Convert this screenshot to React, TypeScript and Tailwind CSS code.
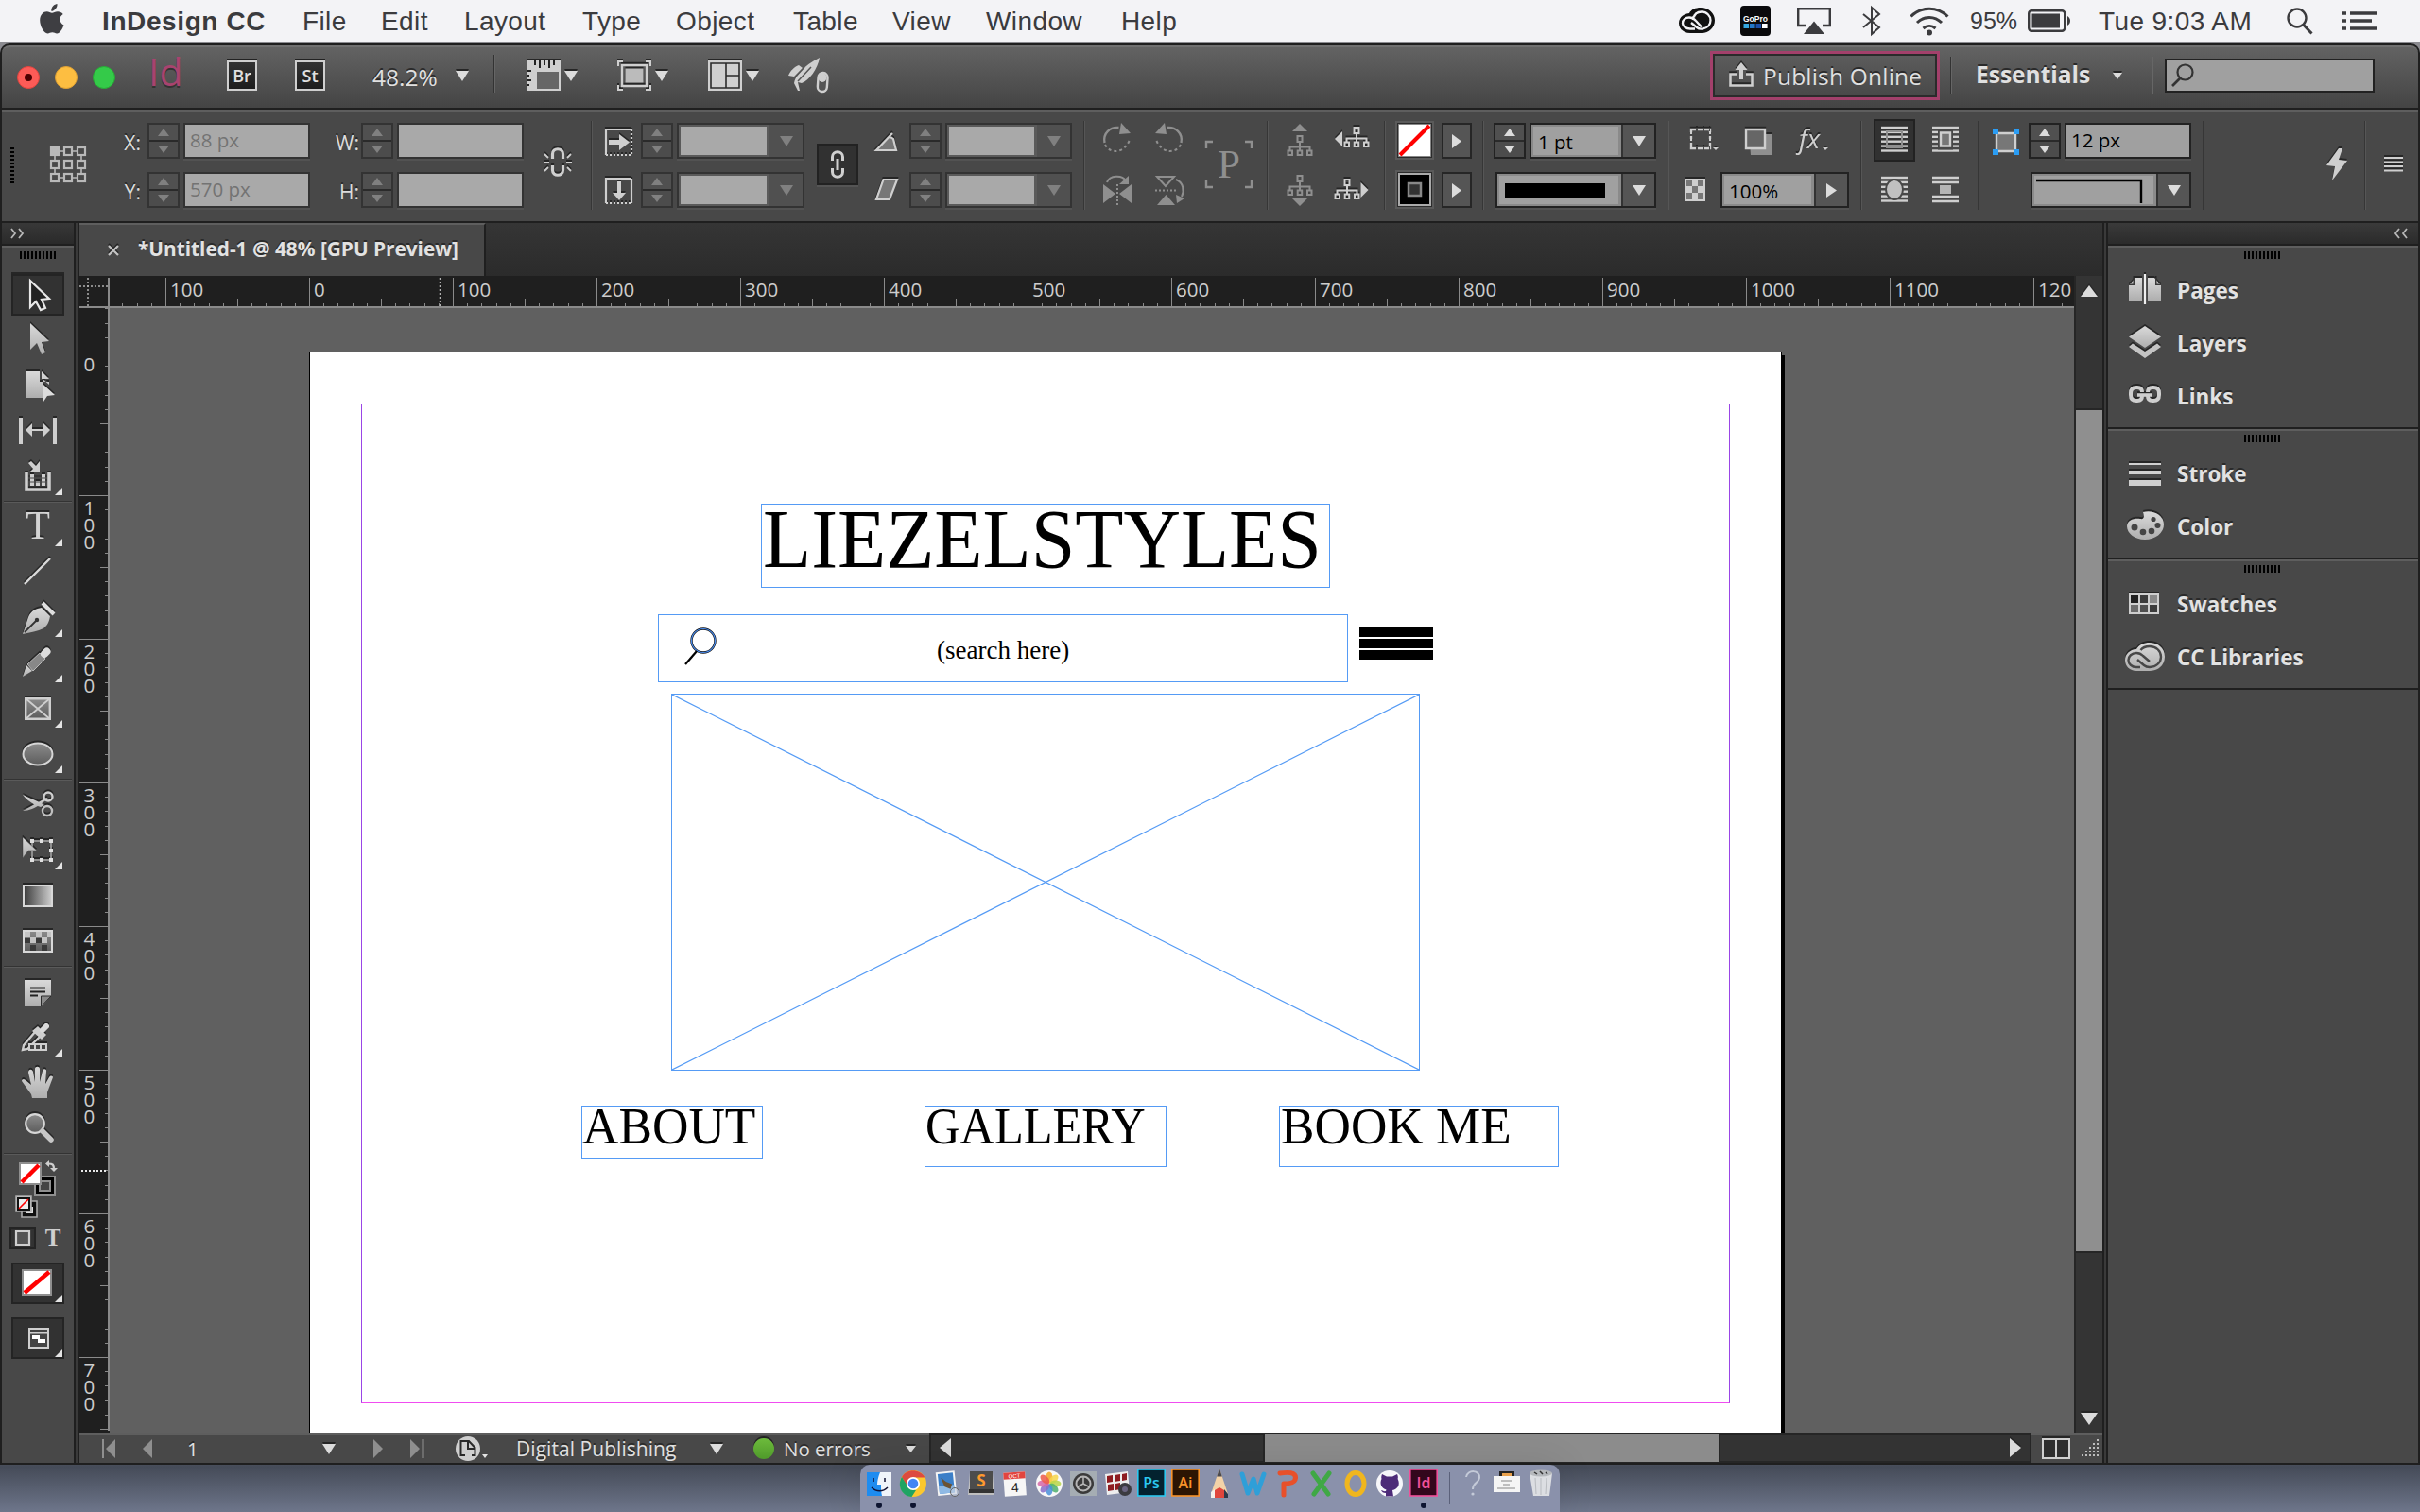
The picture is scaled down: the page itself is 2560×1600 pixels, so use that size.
import React from "react";

type Kids = { children?: React.ReactNode };

const L = "#cfcfcf";
const M = "#8f8f8f";

/* Icon whose view box is given as "x y width height"; drawn at its natural size. */
function Ic({ b, children, className = "" }: Kids & { b: string; className?: string }) {
  const [, , w, h] = b.split(" ");
  return (
    <svg viewBox={b} width={w} height={h} className={"block shrink-0 overflow-visible " + className}>
      {children}
    </svg>
  );
}

const SH = "[filter:drop-shadow(0_-2px_0_#262626)]";

/* ---------- menu bar ---------- */
function MenuBar() {
  const items: [string, string][] = [
    ["File", "w-[83px]"], ["Edit", "w-[88px]"], ["Layout", "w-[125px]"], ["Type", "w-[99px]"],
    ["Object", "w-[124px]"], ["Table", "w-[105px]"], ["View", "w-[99px]"], ["Window", "w-[143px]"], ["Help", "w-[80px]"],
  ];
  return (
    <div className="flex h-[44px] shrink-0 items-center bg-[#f3f3f6] font-['Liberation_Sans',sans-serif] text-[28px] leading-none tracking-[0.400px] text-[#3b3b3e]">
      <Ic b="0 0 26 32" className="ml-[42px] -mt-1">
        <path fill="#3e3e42" d="M18.500 0c.3 2.300-.7 4.300-2 5.800-1.200 1.400-2.800 2.100-4.200 2-.3-2.100.7-4.200 1.900-5.500C15.400.9 17.200.1 18.500 0zM24.700 10.900c-2.200 1.400-3.300 3.200-3.200 5.500.1 2.700 1.500 4.800 4 6-1.400 4.200-4.300 8.900-7.200 9.100-1.900.1-2.700-1.200-4.900-1.200s-3.200 1.200-5 1.200C4.300 31.400.2 23.300.2 17.600c0-6 3.800-9.300 7.300-9.300 2.200 0 4 1.500 5.500 1.500s3.500-1.600 6.200-1.500c2 .1 4.200 1 5.500 2.600z" />
      </Ic>
      <span className="ml-[40px] mt-[2px] w-[212px] font-bold tracking-[0.600px]">InDesign CC</span>
      {items.map(([t, w]) => (
        <span key={t} className={w + " mt-[2px] shrink-0"}>{t}</span>
      ))}
      <div className="ml-auto flex items-center">
        <Ic b="0 0 38 30">
          <path fill="#111" d="M12 28C5 28 0 23.500 0 17.500S5 7.500 11 7C13 3 17.500 1 23 1c8.500 0 15 6 15 13.500S32 28 24 28z" />
          <path fill="none" stroke="#f3f3f6" strokeWidth="2.300" d="M17 23.500h-5c-4.500 0-8-2.600-8-6s3-6 7-6c3 0 5 1.200 7 3.500l6 6.500M13.500 13.500l5-6.500M13 17l6 5c2 1.700 4 2 6 1.500 5-.8 8.500-4.300 8.500-9s-4-9-9.500-9c-5 0-8 3-8 6" />
        </Ic>
        <Ic b="0 0 32 32" className="ml-[27px]">
          <rect width="32" height="32" rx="4" fill="#0a0a0c" />
          <text x="16" y="16.500" fontSize="8.500" fontWeight="bold" fill="#fff" textAnchor="middle" fontFamily="Liberation Sans" letterSpacing="0" textLength="26">GoPro</text>
          <path fill="#35a7e0" d="M3.500 19h5.600v5H3.500z" /><path fill="#2277c8" d="M10 19h5.600v5H10z" /><path fill="#1b4ea8" d="M16.500 19h5.600v5h-5.600z" /><path fill="#fff" d="M23 19h5.600v5H23z" />
        </Ic>
        <Ic b="0 0 36 28" className="ml-[28px]">
          <path fill="none" stroke="#3b3b3e" strokeWidth="2.400" d="M9 19H1.200V1.200h33.600V19H27" /><path fill="#3b3b3e" d="M18 14.500L29 28H7z" />
        </Ic>
        <Ic b="0 0 20 30" className="ml-[33px]">
          <path fill="none" stroke="#3b3b3e" strokeWidth="2" d="M1 8l17 14-8 7V1l8 7L1 22" />
        </Ic>
        <Ic b="0 0 42 30" className="ml-[30px]">
          <g fill="none" stroke="#3b3b3e" strokeWidth="3"><path d="M1.500 10.500c11-11 28-11 39 0" /><path d="M8 17c7.500-7.500 18.500-7.500 26 0" /><path d="M14.500 23c4-3.500 9-3.500 13 0" /></g>
          <circle cx="21" cy="27.500" r="3" fill="#3b3b3e" />
        </Ic>
        <span className="ml-[22px] w-[61px] text-[25px] tracking-[0px]">95%</span>
        <Ic b="0 0 46 24">
          <rect x="1.200" y="1.200" width="38" height="21.600" rx="3" fill="none" stroke="#3b3b3e" strokeWidth="2.400" /><rect x="4.500" y="4.500" width="29.500" height="15" fill="#3b3b3e" /><path fill="#3b3b3e" d="M42 7c4 2 4 8 0 10z" />
        </Ic>
        <span className="ml-[29px] mt-[2px] w-[199px]">Tue 9:03 AM</span>
        <Ic b="0 0 28 28">
          <circle cx="11" cy="11" r="9.500" fill="none" stroke="#3b3b3e" strokeWidth="2.400" /><path stroke="#3b3b3e" strokeWidth="3" d="M17.500 18l9 9.500" />
        </Ic>
        <Ic b="0 0 36 20" className="ml-[31px] mr-[46px]">
          <path stroke="#3b3b3e" strokeWidth="3.600" d="M0 2h4M8 2h28M0 10h4M8 10h23M0 18h4M8 18h28" />
        </Ic>
      </div>
    </div>
  );
}

/* ---------- small shared controls ---------- */
function Down({ w = 14, h = 11, c = "#dcdcdc", className = "" }: { w?: number; h?: number; c?: string; className?: string }) {
  return (
    <Ic b={`0 0 ${w} ${h}`} className={SH + " " + className}>
      <path fill={c} d={`M0 0h${w}L${w / 2} ${h}z`} />
    </Ic>
  );
}
function Spin({ on = false }: { on?: boolean }) {
  const c = on ? "#dcdcdc" : "#808080";
  return (
    <div className={"flex h-[38px] w-[34px] shrink-0 flex-col border-2 bg-[#2c2c2c] " + (on ? "border-[#222]" : "border-[#333]")}>
      <div className="flex flex-1 items-center justify-center bg-[#505050]"><Ic b="0 0 12 8"><path fill={c} d="M6 0l6 8H0z" /></Ic></div>
      <div className="h-[2px] bg-[#2a2a2a]" />
      <div className="flex flex-1 items-center justify-center bg-[#4c4c4c]"><Ic b="0 0 12 8"><path fill={c} d="M6 8l6-8H0z" /></Ic></div>
    </div>
  );
}
function Field({ t = "", on = false }: { t?: string; on?: boolean }) {
  return (
    <div className={"flex h-[38px] w-[134px] shrink-0 items-center border-2 pl-[5px] text-[20.500px] leading-none shadow-[0_2px_0_#525252] " + (on ? "border-[#222] bg-[#a0a0a0] text-black" : "border-[#333] bg-[#a9a9a9] text-[#737373]")}>
      <span className="-mt-[2px]">{t}</span>
    </div>
  );
}
function Combo({ children, on = false, w, right = false }: Kids & { on?: boolean; w: string; right?: boolean }) {
  const c = on ? "#dcdcdc" : "#808080";
  return (
    <div className={"flex h-[38px] shrink-0 border-2 shadow-[0_2px_0_#525252] " + w + (on ? " border-[#222] bg-[#8a8a8a]" : " border-[#333] bg-[#5a5a5a]")}>
      <div className={"my-[2px] ml-[2px] flex flex-1 items-center text-[20.500px] leading-none text-black " + (on ? "bg-[#a0a0a0]" : "bg-[#a9a9a9]")}>{children}</div>
      <div className={"ml-[3px] flex w-[35px] items-center justify-center " + (on ? "border-l-2 border-[#333] bg-[#555]" : "bg-[#505050]")}>
        {right ? <Ic b="0 0 11 15"><path fill={c} d="M0 0l11 7.500L0 15z" /></Ic> : <Ic b="0 0 14 11"><path fill={c} d="M0 0h14L7 11z" /></Ic>}
      </div>
    </div>
  );
}
function ArrowBtn() {
  return (
    <div className="flex h-[38px] w-[32px] items-center justify-center border-2 border-[#262626] bg-[#555]">
      <Ic b="0 0 10 15"><path fill="#dcdcdc" d="M0 0l10 7.500L0 15z" /></Ic>
    </div>
  );
}
function Sep({ m }: { m: string }) {
  return <div className={"mt-[-2px] h-[94px] w-[2px] shrink-0 border-l border-[#363636] bg-[#565656] " + m} />;
}
function Col({ children, className = "" }: Kids & { className?: string }) {
  return <div className={"grid shrink-0 grid-rows-[38px_38px] gap-y-[14px] " + className}>{children}</div>;
}
function Lbl({ children }: Kids) {
  return <div className="flex items-center justify-end pt-[4px] text-[21px] leading-none text-[#dcdcdc] [text-shadow:0_-2px_0_#2a2a2a]">{children}</div>;
}

/* ---------- application bar ---------- */
function AppBar() {
  return (
    <div className="flex h-[66px] shrink-0 items-start rounded-t-[8px] border-t-2 border-[#707070] bg-gradient-to-b from-[#636363] to-[#444] text-[#e0e0e0]">
      <div className="ml-[16px] mt-[20px] flex gap-[16px]">
        <div className="flex size-[24px] items-center justify-center rounded-full border border-[#e0443e] bg-[#fc5b57]"><div className="size-[8px] rounded-full bg-[#4c0002]" /></div>
        <div className="size-[24px] rounded-full border border-[#dea034] bg-[#fdbe41]" />
        <div className="size-[24px] rounded-full border border-[#27aa35] bg-[#34ca49]" />
      </div>
      <div className="ml-[35px] mt-[5px] w-[44px] font-['Open_Sans',sans-serif] text-[41px] leading-none text-[#a8436f] [text-shadow:0_2px_0_#333]">Id</div>
      <div className="ml-[39px] mt-[14px] flex gap-[40px]">
        {["Br", "St"].map((t) => (
          <div key={t} className="flex size-[32px] items-center justify-center border-2 border-[#cfcfcf] bg-gradient-to-b from-[#333] to-[#1d1d1d] text-[18px] font-semibold leading-none shadow-[0_-2px_0_#222]">{t}</div>
        ))}
      </div>
      <div className="ml-[50px] mt-[20px] w-[88px] text-[24.500px] leading-none [text-shadow:0_-2px_0_#2a2a2a]">48.2%</div>
      <Down className="mt-[25px]" />
      <div className="ml-[26px] mt-[8px] h-[40px] w-[2px] border-l border-[#333] bg-[#666]" />
      <Ic b="0 0 36 32" className={"ml-[33px] mt-[14px] " + SH}>
        <path fill={L} d="M0 0h36v32H0z" /><path fill="#666" d="M11 12h23v18H11z" /><path stroke="#222" strokeWidth="2" d="M9 0v5M14 0v8M19 0v5M24 0v8M29 0v5M0 11h5M0 16h3M0 21h5M0 26h3" />
      </Ic>
      <Down className="ml-[4px] mt-[25px]" />
      <Ic b="0 0 36 32" className={"ml-[42px] mt-[14px] " + SH}>
        <path fill="none" stroke={L} strokeWidth="2" d="M1 6V1h5M30 1h5v5M35 26v5h-5M6 31H1v-5" /><path fill="none" stroke={L} strokeWidth="2.500" d="M5 5h26v22H5z" /><path fill="#bbb" d="M8.500 8.500h19v15h-19z" />
      </Ic>
      <Down className="ml-[4px] mt-[25px]" />
      <Ic b="0 0 36 32" className={"ml-[42px] mt-[14px] " + SH}>
        <path fill={L} d="M0 0h36v32H0z" /><path fill="none" stroke="#2a2a2a" strokeWidth="1.600" d="M3 3h30v26H3zM19 3v26M19 16h14" />
      </Ic>
      <Down className="ml-[4px] mt-[25px]" />
      <Ic b="833 60 44 38" className="ml-[31px] mt-[10px]">
        <path fill={L} d="M833 80c2-5 6-9 11-11l4 3-9 9zM839 88c1-7 9-18 27-27-2 12-11 24-19 27l-4-1 2 9h-2z" /><path fill="none" stroke="#555" strokeWidth="1.500" d="M843 86l14-15M838 84l12-13" />
        <rect x="864.200" y="77" width="10" height="20" rx="5" fill="#555" stroke={L} strokeWidth="2.400" transform="rotate(4 869 87)" /><ellipse cx="869" cy="82" rx="4.500" ry="5" fill={L} />
      </Ic>
      <div className="ml-auto mt-[4px] flex h-[52px] w-[243px] items-center border-[3px] border-[#a3406b] bg-gradient-to-b from-[#5d5d5d] to-[#484848] text-[24.500px] leading-none shadow-[inset_0_0_0_2px_#2b2b2b]">
        <Ic b="0 0 26 26" className={"-mt-[3px] ml-[17px] " + SH}>
          <path fill="none" stroke={L} strokeWidth="2.600" d="M8 12.500H1.500v12h23v-12H18" /><path fill={L} d="M13 0l6.500 8H15v10h-4V8H6.500z" />
        </Ic>
        <span className="ml-[10px] mt-[3px] whitespace-nowrap tracking-[0.200px] [text-shadow:0_-2px_0_#2a2a2a]">Publish Online</span>
      </div>
      <div className="ml-[11px] mt-[10px] h-[40px] w-[2px] border-l border-[#333] bg-[#666]" />
      <div className="ml-[25px] mt-[17px] w-[145px] text-[24.500px] font-bold leading-none [text-shadow:0_-2px_0_#2a2a2a]">Essentials</div>
      <Down w={10} h={7} className="mt-[27px]" />
      <div className="ml-[31px] mt-[10px] h-[40px] w-[2px] border-l border-[#333] bg-[#666]" />
      <div className="ml-[12px] mr-[46px] mt-[12px] flex h-[36px] w-[222px] items-center border-2 border-[#222] bg-[#a0a0a0]">
        <Ic b="0 0 26 26" className="ml-[4px]"><circle cx="15.500" cy="9.500" r="8" fill="none" stroke="#333" strokeWidth="2.200" /><path stroke="#333" strokeWidth="2.600" d="M10 16l-8 8" /></Ic>
      </div>
    </div>
  );
}

/* ---------- control strip ---------- */
function Tree({ x, y, c }: { x: number; y: number; c: string }) {
  return (
    <g fill="none" stroke={c} strokeWidth="2" transform={`translate(${x} ${y})`}>
      <path d="M11 1h5v6h-5zM13.500 7v7M3 16v-3.500h21V16M13.500 12v4" /><path d="M1 16.500h4.500v4.500H1zM11.200 16.500h4.500v4.500h-4.500zM21.500 16.500H26v4.500h-4.500z" />
    </g>
  );
}
function Swatch({ none }: { none: boolean }) {
  return (
    <div className="flex h-[41px] w-[41px] -translate-y-[2px] items-center justify-center border-2 border-[#5a5a5a] bg-[#2b2b2b] p-[1px]">
      <Ic b="0 0 35 35">
        {none ? <><path fill="#fff" stroke="#888" strokeWidth="1" d="M.5.5h34v34H.5z" /><path stroke="#f00" strokeWidth="4" d="M2 33L33 2" /></> : <><path fill="#000" stroke="#aaa" strokeWidth="2" d="M1 1h33v33H1z" /><path fill="#333" stroke="#888" strokeWidth="2.500" d="M11 11h13v13H11z" /></>}
      </Ic>
    </div>
  );
}
const wrapLines = (x: number, y: number, n: number) =>
  Array.from({ length: n }, (_, i) => <path key={i} stroke={L} strokeWidth="2.400" d={`M${x} ${y + 1 + i * 4.900}h28`} />);

function ControlStrip() {
  return (
    <div className="flex h-[118px] shrink-0 items-start border-t-2 border-[#5e5e5e] bg-[#484848] pt-[12px]">
      <Ic b="11 156 4 40" className="ml-[9px] mt-[26px]"><path stroke="#000" strokeWidth="4" strokeDasharray="2 2" d="M13 156v40" /></Ic>
      <Ic b="53 155 38 38" className="ml-[38px] mt-[25px]">
        <g fill="none" stroke="#b9b9b9" strokeWidth="2.200">
          <path d="M58 160h28v28H58z" strokeWidth="1.600" />
          {[58, 72, 86].map((x) => [160, 174, 188].map((y) => <rect key={`${x}-${y}`} x={x - 4} y={y - 4} width="8" height="8" fill={x + y === 218 ? "#b9b9b9" : "#484848"} />))}
        </g>
      </Ic>
      <Col className="ml-[37px] w-[21px]"><Lbl>X:</Lbl><Lbl>Y:</Lbl></Col>
      <Col className="ml-[7px]"><Spin /><Spin /></Col>
      <Col className="ml-[4px]"><Field t="88 px" /><Field t="570 px" /></Col>
      <Col className="ml-[24px] w-[28px]"><Lbl>W:</Lbl><Lbl>H:</Lbl></Col>
      <Col className="ml-[2px]"><Spin /><Spin /></Col>
      <Col className="ml-[4px]"><Field /><Field /></Col>
      <Ic b="575 155 30 34" className={"ml-[21px] mt-[25px] " + SH}>
        <path fill="none" stroke={L} strokeWidth="3.200" d="M584.500 168v-5c0-7 11-7 11 0v5M584.500 175v5c0 7 11 7 11 0v-5" /><path stroke={L} strokeWidth="1.800" d="M576 163l4 4M575 172h6M576 181l4-4M604 163l-4 4M605 172h-6M604 181l-4-4" />
      </Ic>
      <Sep m="ml-[20px]" />
      <Col className="ml-[13px]">
        <Ic b="640 130 30 38" className={SH}><path fill="none" stroke={L} strokeWidth="2.200" d="M668 137h-27v27" /><path stroke={L} strokeWidth="2.200" strokeDasharray="2 2" d="M641 164h28M668 137v27" /><path fill={L} d="M644 148h11v-6l11 8.500-11 8.500v-6h-11z" /></Ic>
        <Ic b="640 182 30 38" className={SH}><path fill="none" stroke={L} strokeWidth="2.200" d="M668 189h-27v26M668 189v26" /><path stroke={L} strokeWidth="2.200" strokeDasharray="2 2" d="M641 215h28" /><path fill={L} d="M653 192h4v12h5l-7 8-7-8h5z" /></Ic>
      </Col>
      <Col className="ml-[8px]"><Spin /><Spin /></Col>
      <Col className="ml-[4px]"><Combo w="w-[135px]" /><Combo w="w-[135px]" /></Col>
      <div className="ml-[13px] mt-[22px] flex h-[44px] w-[44px] items-center justify-center border-2 border-[#222] bg-[#313131] shadow-[0_2px_0_#555]">
        <Ic b="0 0 16 30"><path fill="none" stroke={L} strokeWidth="3" d="M2.500 11V7c0-7 11-7 11 0v4M2.500 19v4c0 7 11 7 11 0v-4M8 9v12" /></Ic>
      </div>
      <Col className="ml-[17px]">
        <Ic b="925 130 26 38" className={SH}><path fill="#777" stroke={L} strokeWidth="2.200" d="M944 141l-17 18h21l-3-12c-2-2-3-2-5-2" /></Ic>
        <Ic b="925 182 26 38" className={SH}><path fill="#777" stroke={L} strokeWidth="2.200" d="M934.500 190H949l-8 21h-14z" /></Ic>
      </Col>
      <Col className="ml-[11px]"><Spin /><Spin /></Col>
      <Col className="ml-[4px]"><Combo w="w-[134px]" /><Combo w="w-[134px]" /></Col>
      <Sep m="ml-[12px]" />
      <Col className="ml-[18px]">
        <Ic b="1166 130 32 38"><path fill="none" stroke={M} strokeWidth="2.400" d="M1168.500 151c-2-10 6-17 15-16" /><path fill="none" stroke={M} strokeWidth="2" strokeDasharray="3 3" d="M1169 153c5 10 20 10 26-5" /><path fill={M} d="M1186 130l10 11-12 1z" /></Ic>
        <Ic b="1166 182 32 38"><path fill={M} d="M1167 195v20l13-10zM1197 195v20l-13-10z" /><path stroke={M} strokeWidth="2" strokeDasharray="2 2" d="M1182 195v22" /><path fill="none" stroke={M} strokeWidth="2" d="M1171 193c3-8 16-8 20-2" /><path fill={M} d="M1194 186v9h-10z" /></Ic>
      </Col>
      <Col className="ml-[23px]">
        <Ic b="1221 130 32 38"><path fill="none" stroke={M} strokeWidth="2.400" d="M1249.500 151c2-10-6-17-15-16" /><path fill="none" stroke={M} strokeWidth="2" strokeDasharray="3 3" d="M1249 153c-5 10-20 10-26-5" /><path fill={M} d="M1232 130l-10 11 12 1z" /></Ic>
        <Ic b="1221 182 32 38"><path fill="none" stroke={M} strokeWidth="2" d="M1224 187h18l-9 10z" /><path fill={M} d="M1224 217h19l-9.500-11z" /><path stroke={M} strokeWidth="2" strokeDasharray="2 2" d="M1222 201.500h24" /><path fill="none" stroke={M} strokeWidth="2" d="M1244 190c8 3 9 12 6 18" /><path fill={M} d="M1244 206l9 4-8 5z" /></Ic>
      </Col>
      <Ic b="1275 149 50 50" className="ml-[22px] mt-[19px]">
        <path fill="none" stroke={M} strokeWidth="2.400" d="M1276 157v-7h7M1317 150h7v7M1324 191v7h-7M1283 198h-7v-7" />
        <text x="1300" y="188" textAnchor="middle" fontSize="43" fill={M} fontFamily="Liberation Serif">P</text>
      </Ic>
      <Sep m="ml-[15px]" />
      <Col className="ml-[18px]">
        <Ic b="1360 130 30 38"><path fill={M} d="M1375 131l8 8h-16z" /><Tree x={1361.500} y={143} c={M} /></Ic>
        <Ic b="1360 182 30 38"><path fill={M} d="M1375 218l8-8h-16z" /><Tree x={1361.500} y={185} c={M} /></Ic>
      </Col>
      <Col className="ml-[21px]">
        <Ic b="1411 130 38 38" className={SH}><path fill={L} d="M1412 147l8-8v16z" /><Tree x={1421.500} y={134} c={L} /></Ic>
        <Ic b="1411 182 38 38" className={SH}><path fill={L} d="M1447.500 201l-8-8v16z" /><Tree x={1411.500} y={189} c={L} /></Ic>
      </Col>
      <Sep m="ml-[15px]" />
      <Col className="ml-[10px]"><Swatch none /><Swatch none={false} /></Col>
      <Col className="ml-[8px]"><ArrowBtn /><ArrowBtn /></Col>
      <Sep m="ml-[11px]" />
      <Col className="ml-[10px] w-[172px]">
        <div className="flex gap-[4px]"><Spin on /><Combo on w="w-[134px]"><span className="ml-[5px] mt-[3px]">1 pt</span></Combo></div>
        <div className="pl-[2px]"><Combo on w="w-[170px]"><span className="ml-[6px] h-[15px] w-[106px] bg-black" /></Combo></div>
      </Col>
      <Sep m="ml-[12px]" />
      <Col className="ml-[16px] w-[174px]">
        <Ic b="1782 130 174 38" className={SH}>
          <path fill="none" stroke={L} strokeWidth="2.400" d="M1789 137h20v20h-20z" /><path stroke="#484848" strokeWidth="4" strokeDasharray="2 5" d="M1794 137h15M1794 157h15M1789 142v12M1809 142v12" /><path fill={L} d="M1812 156h6l-3 3z" />
          <path fill={M} d="M1850 142h24v22h-22z" /><path fill="#666" stroke={L} strokeWidth="2.400" d="M1847 137h20v20h-20z" />
          <text x="1903" y="157" fontSize="28" fontStyle="italic" fill={L} fontFamily="Open Sans">fx</text><path fill={L} d="M1928 156h6l-3 3z" />
        </Ic>
        <div className="flex">
          <Ic b="1782 182 22 38" className={SH}><path fill={L} d="M1782 189h22v24h-22z" /><path fill="#777" d="M1784 191h6v6h-6zM1796 191h6v6h-6zM1790 197h6v7h-6zM1784 204h6v7h-6zM1796 204h6v7h-6z" /></Ic>
          <div className="ml-[16px]"><Combo on right w="w-[136px]"><span className="ml-[5px] mt-[3px]">100%</span></Combo></div>
        </div>
      </Col>
      <Sep m="ml-[12px]" />
      <Ic b="1982 126 90 92" className="ml-[12px] mt-[-4px]">
        <path fill="#313131" stroke="#222" strokeWidth="2" d="M1983 127h42v43h-42z" />
        {wrapLines(1990, 134, 6)}<path fill="none" stroke={M} strokeWidth="2" d="M1996 139h16v17h-16z" />
        {wrapLines(2044, 134, 6)}<path fill="#484848" stroke="none" d="M2050 137.500h16v21h-16z" /><path fill="#777" stroke={L} strokeWidth="2.400" d="M2053 140.500h10v14h-10z" />
        {wrapLines(1990, 187, 6)}<ellipse cx="2004" cy="200.500" rx="9" ry="10.500" fill="#c0c0c0" stroke="#484848" strokeWidth="2" />
        <path stroke={L} strokeWidth="2.400" d="M2044 188h28M2044 193h28M2044 208h28M2044 213h28" /><path fill="#b5b5b5" d="M2052 196h12v9h-12z" />
      </Ic>
      <Sep m="ml-[20px]" />
      <Col className="ml-[14px] w-[210px]">
        <div className="flex">
          <Ic b="2108 130 28 38"><path fill="#777" stroke={L} strokeWidth="2.400" d="M2112 141h20v19h-20z" /><path fill="#2b9df4" d="M2108 136h6v6h-6zM2130 136h6v6h-6zM2108 158h6v6h-6zM2130 158h6v6h-6z" /></Ic>
          <div className="ml-[10px] mr-[4px]"><Spin on /></div><Field on t="12 px" />
        </div>
        <div className="pl-[40px]"><Combo on w="w-[170px]"><Ic b="0 0 126 30" className="mt-[3px]"><path fill="none" stroke="#000" strokeWidth="2.400" d="M2 3h111v24" /></Ic></Combo></div>
      </Col>
      <Sep m="ml-[12px]" />
      <Ic b="2461 157 22 34" className={"ml-[129px] mt-[27px] " + SH}><path fill={L} d="M2474 157l-13 18 9 1-3 15 16-21-9-1 4-12z" /></Ic>
      <Sep m="ml-[18px]" />
      <Ic b="0 0 20 16" className={"ml-[19px] mt-[36px] " + SH}><path stroke={L} strokeWidth="2" d="M0 1h20M0 5.500h20M0 10h20M0 14.500h20" /></Ic>
    </div>
  );
}

/* ---------- tools panel ---------- */
function Tool({ y, children, more = false }: Kids & { y: number; more?: boolean }) {
  return (
    <Ic b={`2 ${y} 76 48`}>
      <g className={SH}>{children}</g>
      {more && <path fill="#e4e4e4" d={`M66 ${y + 36}v8h-8z`} />}
    </Ic>
  );
}
const ToolSep = () => <div className="mx-[2px] flex h-[6px] items-center"><div className="h-[2px] w-full border-t border-[#333] bg-[#5a5a5a]" /></div>;
function Grip() {
  return <Ic b="0 0 38 9"><path stroke="#000" strokeWidth="8" strokeDasharray="2 2" d="M0 4h38" /></Ic>;
}
function Tools() {
  const G = "url(#metal)";
  return (
    <div className="flex w-[76px] shrink-0 flex-col bg-[#484848]">
      <svg width="0" height="0" className="absolute"><defs>
        <linearGradient id="metal" x1="0" y1="0" x2="0" y2="1"><stop offset="0" stopColor="#dadada" /><stop offset="1" stopColor="#aeaeae" /></linearGradient>
        <linearGradient id="dim" x1="0" y1="0" x2="0" y2="1"><stop offset="0" stopColor="#8c8c8c" /><stop offset="1" stopColor="#5c5c5c" /></linearGradient>
        <linearGradient id="hgr"><stop offset="0" stopColor="#3a3a3a" /><stop offset="1" stopColor="#d0d0d0" /></linearGradient>
      </defs></svg>
      <div className="h-[22px] bg-gradient-to-b from-[#383838] to-[#2a2a2a] pl-[9px] pt-[6px]"><Ic b="0 0 15 10"><path fill="none" stroke="#b8b8b8" strokeWidth="1.800" d="M1 0l4 5-4 5M9 0l4 5-4 5" /></Ic></div>
      <div className="flex h-[30px] justify-center border-t-2 border-[#1f1f1f] pt-[6px] shadow-[inset_0_2px_0_#5e5e5e]"><Grip /></div>
      <Tool y={288}><path fill="#323232" stroke="#242424" strokeWidth="2" d="M13 291h54v42H13z" /><path fill="#222" stroke="#e8e8e8" strokeWidth="2.200" d="M32 297v28l6-6 5 9 5-2-4-9 8-1z" /></Tool>
      <Tool y={336}><path fill={G} d="M32 342v28l7-7 5 12 4-2-4-11 8-1z" /></Tool>
      <Tool y={384}><path fill={G} d="M28 393h14v11h10v3l-7-6v20H28zM44 393l8 8h-8z" /><path fill="#dcdcdc" d="M46 407v18l4-6 8-1z" /></Tool>
      <Tool y={432}><path stroke={L} strokeWidth="4" d="M22 442v28M58 442v28" /><path fill={L} d="M27 455l7-7v6h12v-6l7 7-7 7v-6H34v6z" /></Tool>
      <Tool y={480} more><path fill="none" stroke={L} strokeWidth="3.600" d="M28 500v18h24v-18" /><path fill={L} d="M32 502h4v12h-4zM38 509h4v5h-4zM44 502h4v12h-4zM42 488v12H31l4-4-5-6 3-2 5 5z" /><path stroke="#484848" d="M30 506h20M30 510h20" /></Tool>
      <ToolSep />
      <Tool y={534} more><text x="40" y="570" textAnchor="middle" fontSize="42" fill="#d4d4d4" fontFamily="Liberation Serif">T</text></Tool>
      <Tool y={582}><path stroke="#dadada" strokeWidth="2.400" d="M26 618l27-27" /></Tool>
      <Tool y={630} more><path fill={G} d="M24 671l6-18c3-7 8-9 14-10l9 9c-1 6-3 10-7 13-6 3-14 4-22 6z" /><path stroke="#dedede" strokeWidth="4" d="M45 638l12 12" /><path stroke="#333" strokeWidth="1.800" d="M26 669l12-12" /><circle cx="39" cy="656" r="2.200" fill="#333" /></Tool>
      <Tool y={678} more><path fill={G} d="M24 716l4-12 6 6z" /><path fill="#888" stroke="#b8b8b8" d="M29 703l13-12 6 6-13 13z" /><path stroke="#ddd" strokeWidth="8" strokeLinecap="round" d="M47 692l2.500-2.500" /></Tool>
      <Tool y={726} more><path fill="url(#dim)" stroke={L} strokeWidth="2.400" d="M27.200 739.200h25.600v21.600H27.200z" /><path stroke={L} strokeWidth="1.800" d="M27 739l26 22M53 739l-26 22" /></Tool>
      <Tool y={774} more><ellipse cx="40" cy="798" rx="15.500" ry="11.500" fill="url(#dim)" stroke="#d6d6d6" strokeWidth="2" /></Tool>
      <ToolSep />
      <Tool y={828}><path fill={G} d="M24 841l20 9 3 2-4 2-6-2c-5-3-10-7-13-11zM24 858l20-11 5-3 2 1-8 6c-6 4-12 7-19 7z" /><circle cx="51" cy="843" r="4.500" fill="none" stroke={L} strokeWidth="2.400" /><circle cx="50" cy="858" r="5" fill="none" stroke="#c0c0c0" strokeWidth="2.400" /></Tool>
      <Tool y={876} more><path fill="none" stroke={M} strokeWidth="2" d="M34 890h20v20H34z" /><path fill="#e0e0e0" d="M32 888h4v4h-4zM42 888h4v4h-4zM52 888h4v4h-4zM52 898h4v4h-4zM52 908h4v4h-4zM42 908h4v4h-4zM32 908h4v4h-4z" /><path fill={G} stroke="#484848" strokeWidth=".5" d="M24 886v22l6-8h9z" /></Tool>
      <Tool y={924}><path fill="url(#hgr)" stroke="#d8d8d8" strokeWidth="2" d="M25 937h30v22H25z" /></Tool>
      <Tool y={972}><path fill="url(#dim)" stroke="#d8d8d8" strokeWidth="2" d="M25 985h30v22H25z" /><path fill="#c4c4c4" d="M26 986h6v6h-6zM38 986h6v6h-6zM50 986h4v6h-4zM32 992h6v6h-6zM44 992h6v6h-6z" /><path fill="#3a3a3a" d="M26 993h6v5h-6zM38 993h6v5h-6zM32 1000h6v6h-6zM44 1000h6v6h-6z" /></Tool>
      <ToolSep />
      <Tool y={1026}><path fill={G} d="M26 1037h28v17l-10 11H26z" /><path stroke="#222" strokeWidth="2" d="M32 1045.500h16M32 1049.500h16M32 1053.500h8" /><path fill="#888" stroke="#2c2c2c" d="M43.500 1065v-11H54z" /></Tool>
      <Tool y={1074} more><path fill="none" stroke={L} strokeWidth="2.400" d="M37 1092l-12 14-1 5 5-1 13-13" /><path fill={L} d="M34 1091l6-5 9 9-5 5z" /><path stroke="#dadada" strokeWidth="6" strokeLinecap="round" d="M45 1090l4-4" /><path fill={L} d="M30 1104h20v8H30z" /><path fill="#444" d="M32 1106h4v4h-4zM38 1106h4v4h-4zM44 1106h4v4h-4z" /></Tool>
      <Tool y={1122}><path fill={G} d="M34 1162l-1-4-10-14c0-2 2-3 4-1l6 5-3-13c0-4 4-4 5-1l2 11v-14c0-3 5-3 5 0v14l3-12c1-3 5-2 4 1l-1 13 4-7c2-3 4-1 4 0l-6 16v6z" /></Tool>
      <Tool y={1170}><circle cx="37" cy="1189" r="9.800" fill="url(#dim)" stroke="#d6d6d6" strokeWidth="2.200" /><path stroke="#c6c6c6" strokeWidth="5.500" strokeLinecap="round" d="M45 1197l9 9" /></Tool>
      <ToolSep />
      <Ic b="2 1224 76 224">
        <path fill="#000" stroke={M} strokeWidth="2" d="M37 1245h21v20H37z" /><path fill="#444" stroke={M} strokeWidth="2" d="M42 1250h11v10H42z" />
        <path fill="#fff" stroke={M} strokeWidth="2" d="M21 1231h22v22H21z" /><path stroke="#f00" strokeWidth="4.500" d="M23 1251l18-18" />
        <path fill="none" stroke={L} strokeWidth="2.200" d="M51 1231.500c5 0 6 1 6 6" /><path fill={L} d="M52 1228v7l-4-3.500zM53 1236h8l-4 4z" />
        <path fill="#111" stroke="#aaa" strokeWidth="1.600" d="M23 1271h16v17H23z" /><path stroke="#ddd" strokeWidth="2" d="M27 1283h7v-6" fill="none" /><path fill="#eee" stroke="#aaa" strokeWidth="1.600" d="M17 1266h16v16H17z" /><path fill="#eee" stroke="#111" strokeWidth="2" d="M19 1268h12v12H19z" /><path stroke="#f00" strokeWidth="1.600" d="M20 1279l10-10" />
        <path fill="#323232" stroke="#242424" strokeWidth="2" d="M11 1299h26v22H11zM13 1337h54v42H13zM13 1395h54v42H13z" />
        <path fill="#555" stroke={L} strokeWidth="2.200" d="M17 1303h14v14H17z" />
        <text x="56" y="1318" textAnchor="middle" fontSize="25" fontWeight="bold" fill={L} fontFamily="Liberation Serif">T</text>
        <path fill="#fff" stroke={M} strokeWidth="2" d="M24 1344h30v26H24z" /><path stroke="#f00" strokeWidth="4.500" d="M26 1368l26-22" />
        <path fill="#e4e4e4" d="M66 1370v8h-8zM66 1428v8h-8z" />
        <path fill="#444" stroke={L} strokeWidth="2" d="M31 1406h20v20H31zM31 1410.500h20" /><path fill="#fff" d="M34 1413h8v4h-8zM40 1417h8v4h-8z" />
      </Ic>
    </div>
  );
}

/* ---------- rulers ---------- */
function HRuler() {
  const ticks: React.ReactNode[] = [];
  for (let i = -14; i <= 123; i++) {
    const x = Math.floor(327.500 + i * 15.200) + 0.500;
    const major = i % 10 === 0;
    ticks.push(<path key={i} stroke="#8a8a8a" d={`M${x} ${major ? 294 : i % 5 === 0 ? 316 : 321}V324`} />);
    /* the last label has room for three digits only */
    if (major) ticks.push(<text key={"t" + i} x={x + 4.500} y="314" fontSize="20.500" fill="#cdcdcd" fontFamily="Open Sans">{i === 120 ? "120" : Math.abs(i * 10)}</text>);
  }
  return (
    <svg viewBox="84 292 2110 34" width="2110" height="34" className="block bg-[#1f1f1f]">
      {ticks}
      <path stroke="#1f1f1f" strokeWidth="30" d="M99 292v32" />
      <path stroke="#8a8a8a" strokeWidth="2" d="M84 325h2110M115 294v32" />
      <path stroke="#b0b0b0" strokeWidth="1.500" strokeDasharray="2 2" d="M84 303h30M93 294v30M465.500 294v30" />
    </svg>
  );
}
function VRuler() {
  const ticks: React.ReactNode[] = [];
  for (let i = -3; i <= 75; i++) {
    const y = Math.floor(372.500 + i * 15.200) + 0.500;
    const major = i % 10 === 0;
    ticks.push(<path key={i} stroke="#8a8a8a" d={`M${major ? 84 : i % 5 === 0 ? 106 : 111} ${y}H114`} />);
    if (major)
      String(i * 10).split("").forEach((d, k) =>
        ticks.push(<text key={`t${i}-${k}`} x="88.500" y={y + 20.500 + k * 18} fontSize="20.500" fill="#cdcdcd" fontFamily="Open Sans">{d}</text>));
  }
  return (
    <svg viewBox="84 326 32 1190" width="32" height="1190" className="block shrink-0 bg-[#1f1f1f]">
      {ticks}
      <path stroke="#8a8a8a" strokeWidth="2" d="M115 326v1188" />
      <path stroke="#e8e8e8" strokeWidth="2" strokeDasharray="2 2" d="M86 1239h28" />
    </svg>
  );
}

/* ---------- document ---------- */
const frame = "absolute border border-[#559bf5] font-['Liberation_Serif',serif] text-black";
function Canvas() {
  return (
    <div className="relative h-[1190px] w-[2078px] overflow-hidden bg-[#606060]">
      <div className="absolute left-[215px] top-[50px] h-[1200px] w-[1557px] bg-black" />
      <div className="absolute left-[211px] top-[46px] h-[1200px] w-[1558px] border border-black bg-white" />
      <div className="absolute left-[266px] top-[101px] h-[1058px] w-[1448px] border border-x-[#9a45e6] border-y-[#f04cf0]" />
      <div className={frame + " left-[689px] top-[207px] h-[89px] w-[602px]"}>
        <span className="absolute left-[1px] top-[-8px] origin-left scale-x-[0.941] whitespace-nowrap text-[89px] leading-none">LIEZELSTYLES</span>
      </div>
      <div className={frame + " left-[580px] top-[324px] h-[72px] w-[730px]"}>
        <Ic b="725 660 36 44" className="absolute left-[28px] top-[10px]">
          <circle cx="744" cy="677" r="12.500" fill="none" stroke="#111" strokeWidth="2.400" /><circle cx="744" cy="677" r="12.500" fill="none" stroke="#4a8df0" strokeWidth="1.200" /><path stroke="#000" strokeWidth="2.200" d="M737 688l-12 14" />
        </Ic>
        <span className="absolute left-[294px] top-[24px] whitespace-nowrap text-[27px] leading-none">(search here)</span>
      </div>
      <div className="absolute left-[1322px] top-[338px] flex w-[78px] flex-col gap-[2px]">
        <div className="h-[10px] bg-black" /><div className="h-[10px] bg-black" /><div className="h-[10px] bg-black" />
      </div>
      <div className={frame + " left-[594px] top-[408px] h-[399px] w-[792px]"}>
        <svg viewBox="0 0 790 397" className="block size-full"><path stroke="#559bf5" strokeWidth="1.200" d="M0 0l790 397M790 0L0 397" /></svg>
      </div>
      <div className={frame + " left-[499px] top-[844px] h-[56px] w-[192px]"}>
        <span className="absolute left-0 top-[-6px] origin-left scale-x-[0.977] whitespace-nowrap text-[54.500px] leading-none">ABOUT</span>
      </div>
      <div className={frame + " left-[862px] top-[844px] h-[65px] w-[256px]"}>
        <span className="absolute left-0 top-[-6px] origin-left scale-x-[0.926] whitespace-nowrap text-[54.500px] leading-none">GALLERY</span>
      </div>
      <div className={frame + " left-[1237px] top-[844px] h-[65px] w-[296px]"}>
        <span className="absolute left-[1px] top-[-6px] origin-left scale-x-[0.976] whitespace-nowrap text-[54.500px] leading-none">BOOK ME</span>
      </div>
    </div>
  );
}
function DocumentArea() {
  return (
    <div className="flex w-[2140px] shrink-0 flex-col">
      <div className="flex h-[56px] bg-gradient-to-b from-[#353535] to-[#2b2b2b]">
        <div className="flex w-[430px] items-center border-r-2 border-t-2 border-r-[#1f1f1f] border-t-[#5e5e5e] bg-[#484848] text-[#e2e2e2]">
          <Ic b="0 0 12 12" className={"ml-[30px] " + SH}><path stroke="#c4c4c4" strokeWidth="2.200" d="M1 1l10 10M11 1L1 11" /></Ic>
          <span className="-mt-[3px] ml-[20px] whitespace-nowrap text-[20.800px] font-bold leading-none [text-shadow:0_-2px_0_#2a2a2a]">*Untitled-1 @ 48% [GPU Preview]</span>
        </div>
      </div>
      <div className="flex">
        <div className="w-[2110px]">
          <HRuler />
          <div className="flex"><VRuler /><Canvas /></div>
        </div>
        <div className="flex h-[1224px] w-[30px] flex-col items-center border-l-2 border-[#262626] bg-[#343434]">
          <Ic b="0 0 18 12" className={"mt-[10px] " + SH}><path fill="#dcdcdc" d="M9 0l9 12H0z" /></Ic>
          <div className="mt-[118px] h-[894px] w-full shrink-0 border-y-2 border-[#262626] bg-[#8f8f8f]" />
          <Down w={18} h={13} className="mt-[169px]" />
        </div>
      </div>
      <div className="flex h-[32px] items-center border-t-2 border-[#5e5e5e] bg-[#484848] text-[20.500px] leading-none text-[#e0e0e0]">
        <Ic b="108 0 15 20" className="ml-[24px]"><path fill={M} d="M108 0h2v20h-2zM122 0v20l-10-10z" /></Ic>
        <Ic b="0 0 10 20" className="ml-[28px]"><path fill={M} d="M10 0v20L0 10z" /></Ic>
        <span className="ml-[37px] w-[143px] [text-shadow:0_-2px_0_#2a2a2a]">1</span>
        <Down />
        <Ic b="0 0 10 20" className="ml-[40px]"><path fill={M} d="M0 0v20l10-10z" /></Ic>
        <Ic b="0 0 15 20" className="ml-[29px]"><path fill={M} d="M12.500 0h2v20h-2zM0 0v20l10-10z" /></Ic>
        <Ic b="0 0 34 26" className="ml-[33px]"><circle cx="13" cy="13" r="13" fill={L} /><path fill="none" stroke="#2a2a2a" strokeWidth="2" d="M10 20H5.500V5H14l6.500 7v8H17M13 5v8h7.500" /><path fill="#e4e4e4" d="M28 19h6l-3 4z" /></Ic>
        <span className="ml-[30px] w-[205px] whitespace-nowrap text-[21px] tracking-[0.050px] [text-shadow:0_-2px_0_#2a2a2a]">Digital Publishing</span>
        <Down />
        <div className="ml-[32px] size-[22px] rounded-full bg-gradient-to-b from-[#6dbb3c] to-[#4f9a2a] shadow-[0_-2px_0_#222]" />
        <span className="ml-[10px] w-[129px] whitespace-nowrap text-[20.500px] [text-shadow:0_-2px_0_#2a2a2a]">No errors</span>
        <Down w={11} h={7} />
        <div className="-mt-[2px] ml-auto flex h-[32px] w-[1166px] items-center border-2 border-[#262626] bg-[#333]">
          <Ic b="0 0 12 20" className="ml-[9px]"><path fill="#dcdcdc" d="M12 0v20L0 10z" /></Ic>
          <div className="ml-[330px] h-[30px] w-[484px] border-x-2 border-[#262626] bg-[#8c8c8c]" />
          <Ic b="0 0 12 20" className={"ml-[306px] " + SH}><path fill="#dcdcdc" d="M0 0v20l12-10z" /></Ic>
        </div>
        <Ic b="0 0 30 22" className={"ml-[11px] " + SH}><path fill="#2d2d2d" stroke={L} strokeWidth="2" d="M1 1h28v20H1zM15 1v20" /></Ic>
        <Ic b="0 0 20 20" className="ml-[12px] mr-[2px]">
          {[0, 1, 2, 3, 4].map((i) => [0, 1, 2, 3, 4].filter((j) => i + j >= 4).map((j) => <rect key={`${i}${j}`} x={i * 4} y={j * 4} width="2" height="2" fill="#bdbdbd" />))}
        </Ic>
      </div>
    </div>
  );
}

/* ---------- right dock of panels ---------- */
function Group({ children }: Kids) {
  return (
    <div className="border-b-2 border-[#1f1f1f] shadow-[inset_0_2px_0_#5e5e5e]">
      <div className="flex justify-center pb-[5px] pr-[2px] pt-[6px]"><Grip /></div>
      <div className="pb-[4px]">{children}</div>
    </div>
  );
}
function PanelRow({ t, children }: Kids & { t: string }) {
  return (
    <div className="flex h-[56px] items-center text-[#e2e2e2]">
      <Ic b="0 0 42 36" className={"-mt-[2px] ml-[18px] " + SH}>{children}</Ic>
      <span className="ml-[13px] mt-px text-[22.500px] font-bold leading-none [text-shadow:0_-2px_0_#2a2a2a]">{t}</span>
    </div>
  );
}
function RightPanels() {
  const G = "url(#metal)";
  return (
    <div className="flex w-[328px] shrink-0 flex-col bg-[#484848]">
      <div className="flex h-[24px] justify-end border-b-2 border-[#1f1f1f] bg-gradient-to-b from-[#3a3a3a] to-[#2b2b2b] pr-[11px] pt-[6px]"><Ic b="0 0 14 10"><path fill="none" stroke="#b8b8b8" strokeWidth="1.800" d="M5 0L1 5l4 5M13 0L9 5l4 5" /></Ic></div>
      <Group>
        <PanelRow t="Pages"><path fill={G} d="M4 13l7-8h7v24H4zM38 13l-7-8h-7v24h14z" /><path fill="#3a3a3a" d="M10 5v8H4v-1.500h4.500V5zM32 5v8h6v-1.500h-4.500V5z" /><path stroke="#eee" strokeWidth="2.200" d="M21 1v32" /></PanelRow>
        <PanelRow t="Layers"><path fill={G} d="M21 0l17 11.500L21 23 4 11.500z" /><path fill="#c4c4c4" d="M4 22l4-3.500L21 27l13-8.500 4 3.500-17 12z" /></PanelRow>
        <PanelRow t="Links"><path fill="none" stroke={L} strokeWidth="4" d="M18 14c0-4-2-5-5-5h-1c-4 0-6 2-6 6v2c0 4 2 6 6 6h1c3 0 5-1 5-5M24 14c0-4 2-5 5-5h1c4 0 6 2 6 6v2c0 4-2 6-6 6h-1c-3 0-5-1-5-5" /><path stroke={L} strokeWidth="3.600" d="M13 17h16" /></PanelRow>
      </Group>
      <Group>
        <PanelRow t="Stroke"><path fill={L} d="M4 7h34v2H4zM4 15h34v4H4zM4 25h34v6H4z" /></PanelRow>
        <PanelRow t="Color"><path fill={G} fillRule="evenodd" d="M19 3c9-3 22 2 22 13 0 9-9 16-20 16C10 32 2 25 2 18c0-7 8-9 14-8 5 1 4-4 3-7z" /><g fill="#444"><circle cx="10" cy="19" r="3.500" /><circle cx="19" cy="24" r="3.300" /><circle cx="28" cy="23" r="3.300" /><circle cx="34.500" cy="17" r="3" /><circle cx="30" cy="10.500" r="2.600" /></g></PanelRow>
      </Group>
      <Group>
        <PanelRow t="Swatches"><path fill={L} d="M4 7h32v22H4z" /><path fill="#1f1f1f" d="M6 9h8v8H6z" /><path fill="#3c3c3c" d="M16 9h8v8h-8zM26 19h8v8h-8z" /><path fill="#8a8a8a" d="M26 9h8v8h-8z" /><path fill="#6c6c6c" d="M6 19h8v8H6z" /><path fill="#505050" d="M16 19h8v8h-8z" /></PanelRow>
        <PanelRow t="CC Libraries"><path fill={G} d="M12 33C5 33 0 28 0 21.500 0 15 5 10.500 12 10c2.500-4.500 8-7 14-7 9 0 16 6 16 15s-7 15-16 15z" /><path fill="none" stroke="#484848" strokeWidth="2.400" d="M16 29h-4c-5 0-8.500-3.500-8.500-7.500S7 14 12 14c3 0 5 1 7 3l7 6M13 21l7 6c2 1.700 4 2 6 2 7 0 12-5 12-11S33 7 26 7c-5 0-8 2-9.500 4" /></PanelRow>
      </Group>
    </div>
  );
}

/* ---------- macOS dock ---------- */
function DockItem({ children, dot = false }: Kids & { dot?: boolean }) {
  return (
    <div className="flex h-[50px] w-[36px] shrink-0 flex-col items-center">
      <Ic b="0 0 32 32" className="mt-[4px]">{children}</Ic>
      {dot && <div className="mt-[4px] size-[6px] rounded-full bg-[#0d1430]" />}
    </div>
  );
}
function Adobe({ t, c, f }: { t: string; c: string; f: string }) {
  return <><rect x="1.800" y="1" width="28.400" height="28" fill={f} stroke={c} strokeWidth="1.600" /><text x="16" y="20.500" textAnchor="middle" fontSize="16" fontWeight="600" fontFamily="Open Sans" fill={c}>{t}</text></>;
}
function Dock() {
  const petals = ["#f5a623", "#f7d64a", "#b8d64a", "#4fb06d", "#4a90d9", "#8a6fc9", "#d667a8", "#ee5a4a"];
  return (
    <div className="absolute bottom-0 left-[910px] flex h-[50px] w-[740px] rounded-t-[10px] bg-[#8a91ab] pl-[2px] shadow-[0_0_40px_rgba(0,0,0,0.1)]">
      <DockItem dot><path fill="#f0f4fa" d="M3 4h26v25H3z" /><path fill="#1e8cf0" d="M3 4h14c-2 5-3 9-3 13h4c0 4 0 8 1 12H3z" /><path stroke="#113" strokeWidth="1.500" fill="none" d="M10 10v4M22 10v4M8 20c5 5 12 5 17 0" /></DockItem>
      <DockItem dot><circle cx="16" cy="16" r="14" fill="#fbc82e" /><path fill="#dd4b3e" d="M4 9C9 0 23 0 28.500 9.500H16L10 19z" /><path fill="#1fa463" d="M4 9l7 11 8 3-4.500 7C3 29-1 17 4 9z" /><circle cx="16" cy="16" r="7" fill="#fff" /><circle cx="16" cy="16" r="5.300" fill="#4385f3" /></DockItem>
      <DockItem><g transform="rotate(-6 16 16)"><path fill="#f4f4f4" d="M5 3h20v25H5z" /><path fill="#3c7fc8" d="M7 5h16v21H7z" /><path fill="#8fb9e4" d="M7 18h16v8H7z" /><path fill="#6b5233" d="M10 9l5 5 6 3-2 5-6-3z" /></g><circle cx="24" cy="25" r="4.500" fill="#c4cfdf" fillOpacity=".6" stroke="#666" /></DockItem>
      <DockItem><path fill="#bfbfbf" d="M4 4h24l2 24H2z" /><path fill="#4c4c4c" d="M4 3h24v20H4z" /><path fill="#333" d="M3 22h26v4H3z" /><text x="16" y="19" textAnchor="middle" fontSize="17" fontWeight="bold" fill="#ff9a2e" fontFamily="Open Sans">S</text></DockItem>
      <DockItem><g transform="rotate(-4 16 16)"><path fill="#f6f6f6" d="M4 4h23v25H4z" /><path fill="#e2453f" d="M4 4h23v7H4z" /><text x="15.500" y="10" textAnchor="middle" fontSize="6" fill="#fff" fontFamily="Liberation Sans">OCT</text><text x="15.500" y="25" textAnchor="middle" fontSize="14" fill="#222" fontFamily="Liberation Sans">4</text></g></DockItem>
      <DockItem><circle cx="16" cy="16" r="14" fill="#f8f8f8" />{petals.map((c, i) => <ellipse key={c} cx="16" cy="9.500" rx="3.500" ry="6" fill={c} fillOpacity=".85" transform={`rotate(${i * 45} 16 16)`} />)}</DockItem>
      <DockItem><path fill="#a5adb3" d="M2 3h28v26H2z" /><circle cx="16" cy="16" r="11" fill="#3a3a3a" /><circle cx="16" cy="16" r="7.500" fill="none" stroke="#b5b5b5" strokeWidth="2" /><path stroke="#b5b5b5" strokeWidth="1.600" d="M16 16V8M16 16l7 4M16 16l-7 4" /></DockItem>
      <DockItem><path fill="#eee" d="M3 6l24-3 2 22-24 3z" /><path fill="#8e1c22" d="M5 8l6-1v7l-6 1zM13 7l6-1v7l-6 1zM21 6l5-1v7l-5 1zM6 17l6-1v7l-6 1zM14 16l5-1v7l-5 1z" /><circle cx="24" cy="22" r="7" fill="#3b3b40" /><circle cx="24" cy="22" r="3" fill="#6a6480" /></DockItem>
      <DockItem><Adobe t="Ps" c="#2bc8f0" f="#03222f" /></DockItem>
      <DockItem><Adobe t="Ai" c="#f7932b" f="#2c1503" /></DockItem>
      <DockItem><path fill="#f3d3a8" d="M16 0l9 27H7z" /><path fill="#4a4a50" d="M16 0l2.800 8.500h-5.600z" /><path fill="#e0463c" d="M11 23l5-3 5 3v8H11z" /><path fill="#f4f0ea" d="M7 25l4-3v9H7z" /><path fill="#2d3a4a" d="M21 22l4 5v4h-4z" /></DockItem>
      <DockItem><path fill="none" stroke="#2f9fd8" strokeWidth="5" strokeLinecap="round" strokeLinejoin="round" d="M4 6l6 20 6-15 4 15 7-20" /></DockItem>
      <DockItem><path fill="none" stroke="#e8502a" strokeWidth="5" strokeLinecap="round" strokeLinejoin="round" d="M8 5c14-2 18 1 16 7-1 3-6 4-12 4v12" /></DockItem>
      <DockItem><path fill="none" stroke="#3fa845" strokeWidth="5" strokeLinecap="round" d="M7 5l16 22M24 5L8 27" /></DockItem>
      <DockItem><ellipse cx="16" cy="16" rx="9" ry="11.500" fill="none" stroke="#f0b61e" strokeWidth="5" /></DockItem>
      <DockItem><circle cx="16" cy="16" r="14" fill="#f6f6fa" /><path fill="#4d2b78" d="M8 6l5 2.500h6L24 6c1 2 1 3.500.6 5 3 6 0 11-5.600 12l1 6.500h-8V26c-3 0-4-1-5-3 2 .5 3 1.500 5 1l.5-1.500C7.500 21 5 16 7.500 11 7 9.500 7.300 8 8 6z" /></DockItem>
      <DockItem dot><Adobe t="Id" c="#f0509a" f="#33071c" /></DockItem>
      <div className="ml-[9px] mr-[6px] mt-[8px] h-[34px] w-[1px] bg-[#5b617a]" />
      <DockItem><path fill="none" stroke="#c4cad8" strokeWidth="2" d="M9 9c1-8 15-8 14 1-.5 5-7 5-7 12" /><circle cx="16" cy="27" r="1.600" fill="#c4cad8" /></DockItem>
      <DockItem><path fill="#222" d="M8 3h16v7H8z" /><path fill="#e8a04c" d="M11 5h10v3H11z" /><path fill="#f5f5f5" d="M2 8h28v17H2z" /><path stroke="#888" d="M10 13h11M12 17h7M6 21h19" /></DockItem>
      <DockItem><path fill="#dcdee2" d="M4 5h24l-3 24H8z" /><ellipse cx="16" cy="5" rx="12" ry="3.500" fill="#b5b8bc" /><path stroke="#333" strokeWidth="1.500" d="M9 4l3 2M15 3l3 3M21 4l2 2" /><path fill="none" stroke="#b8bbc0" d="M10 10l1 17M16 10v18M22 10l-1 17" /></DockItem>
    </div>
  );
}

const Divider = () => <div className="w-[6px] shrink-0 border-x-2 border-[#1f1f1f] bg-[#3a3a3a]" />;

export default function App() {
  return (
    <div className="relative flex h-[1600px] w-[2560px] flex-col overflow-hidden bg-gradient-to-b from-[#8b8b90] from-95% via-[#454b58] via-97% to-[#6e768b] font-['Open_Sans',sans-serif]">
      <MenuBar />
      <div className="mt-[2px] flex h-[1504px] shrink-0 flex-col rounded-t-[10px] border-2 border-[#1f1f1f] bg-[#1f1f1f]">
        <AppBar />
        <div className="h-[2px] shrink-0" />
        <ControlStrip />
        <div className="h-[2px] shrink-0" />
        <div className="flex h-[1312px]">
          <Tools />
          <Divider />
          <DocumentArea />
          <Divider />
          <RightPanels />
        </div>
      </div>
      <Dock />
    </div>
  );
}
